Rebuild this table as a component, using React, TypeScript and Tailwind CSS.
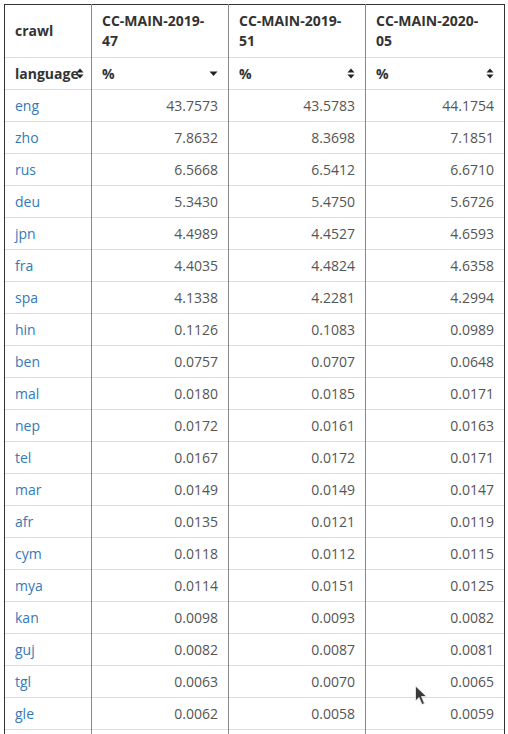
import React from 'react';

const rows: [string, string, string, string][] = [
  ['eng', '43.7573', '43.5783', '44.1754'],
  ['zho', '7.8632', '8.3698', '7.1851'],
  ['rus', '6.5668', '6.5412', '6.6710'],
  ['deu', '5.3430', '5.4750', '5.6726'],
  ['jpn', '4.4989', '4.4527', '4.6593'],
  ['fra', '4.4035', '4.4824', '4.6358'],
  ['spa', '4.1338', '4.2281', '4.2994'],
  ['hin', '0.1126', '0.1083', '0.0989'],
  ['ben', '0.0757', '0.0707', '0.0648'],
  ['mal', '0.0180', '0.0185', '0.0171'],
  ['nep', '0.0172', '0.0161', '0.0163'],
  ['tel', '0.0167', '0.0172', '0.0171'],
  ['mar', '0.0149', '0.0149', '0.0147'],
  ['afr', '0.0135', '0.0121', '0.0119'],
  ['cym', '0.0118', '0.0112', '0.0115'],
  ['mya', '0.0114', '0.0151', '0.0125'],
  ['kan', '0.0098', '0.0093', '0.0082'],
  ['guj', '0.0082', '0.0087', '0.0081'],
  ['tgl', '0.0063', '0.0070', '0.0065'],
  ['gle', '0.0062', '0.0058', '0.0059'],
];

const SortBoth = () => (
  <svg width="8" height="11" viewBox="0 0 8 11" className="shrink-0">
    <path d="M4 0.5 L7.5 4.5 H0.5 Z" fill="#222" />
    <path d="M4 10.5 L7.5 6.5 H0.5 Z" fill="#222" />
  </svg>
);

const SortDown = () => (
  <svg width="9" height="6" viewBox="0 0 9 6" className="shrink-0">
    <path d="M0.5 0.5 H8.5 L4.5 5 Z" fill="#222" />
  </svg>
);

const headers = ['CC-MAIN-2019-47', 'CC-MAIN-2019-51', 'CC-MAIN-2020-05'];

export default function App() {
  return (
    <div className="relative w-[508px] h-[734px] overflow-hidden bg-white pl-[4px] pt-[4px] text-[14px] text-[#333]" style={{ fontFamily: '"Open Sans", "Noto Sans", sans-serif' }}>
      <table className="table-fixed border-collapse w-[500px]">
        <colgroup>
          <col className="w-[87px]" />
          <col className="w-[137px]" />
          <col className="w-[137px]" />
          <col className="w-[139px]" />
        </colgroup>
        <thead>
          <tr className="h-[53px] border-t-[1.5px] border-t-[#333] border-b border-b-[#ddd]">
            <th className="border-l-[1.5px] border-l-[#333] border-r border-r-[#888] px-[10px] text-left font-bold leading-5 align-middle">crawl</th>
            {headers.map((h, i) => (
              <th key={h} className={`px-[10px] text-left font-bold leading-5 align-middle ${i === 2 ? 'border-r-[1.5px] border-r-[#333]' : 'border-r border-r-[#888]'}`}>
                {h.slice(0, 13)}
                <br />
                {h.slice(13)}
              </th>
            ))}
          </tr>
          <tr className="h-[32px] border-b border-b-[#ddd]">
            <th className="border-l-[1.5px] border-l-[#333] border-r border-r-[#888] pl-[10px] pr-[7px] text-left font-bold">
              <div className="flex items-center">
                <span>language</span>
                <span className="-ml-[3px]"><SortBoth /></span>
              </div>
            </th>
            {[0, 1, 2].map((i) => (
              <th key={i} className={`px-[10px] text-left font-bold ${i === 2 ? 'border-r-[1.5px] border-r-[#333]' : 'border-r border-r-[#888]'}`}>
                <div className="flex items-center justify-between">
                  <span>%</span>
                  {i === 0 ? <SortDown /> : <SortBoth />}
                </div>
              </th>
            ))}
          </tr>
        </thead>
        <tbody>
          {rows.map((r) => (
            <tr key={r[0]} className="h-[32px] border-b border-b-[#ddd]">
              <td className="border-l-[1.5px] border-l-[#333] border-r border-r-[#888] px-[10px] text-[#337ab7]">{r[0]}</td>
              <td className="border-r border-r-[#888] px-[10px] text-right text-[#555]">{r[1]}</td>
              <td className="border-r border-r-[#888] px-[10px] text-right text-[#555]">{r[2]}</td>
              <td className="border-r-[1.5px] border-r-[#333] px-[10px] text-right text-[#555]">{r[3]}</td>
            </tr>
          ))}
          <tr className="h-[32px]">
            <td className="border-l-[1.5px] border-l-[#333] border-r border-r-[#888]" />
            <td className="border-r border-r-[#888]" />
            <td className="border-r border-r-[#888]" />
            <td className="border-r-[1.5px] border-r-[#333]" />
          </tr>
        </tbody>
      </table>
      <svg className="absolute left-[414px] top-[685px]" width="16" height="22" viewBox="0 0 16 22">
        <path d="M1.5 1 L1.5 16 L5 12.5 L8 19.5 L10.5 18.5 L7.5 11.5 L12.5 11.5 Z" fill="#3a3a3a" stroke="#f4f4f4" strokeWidth="0.8" />
      </svg>
    </div>
  );
}
